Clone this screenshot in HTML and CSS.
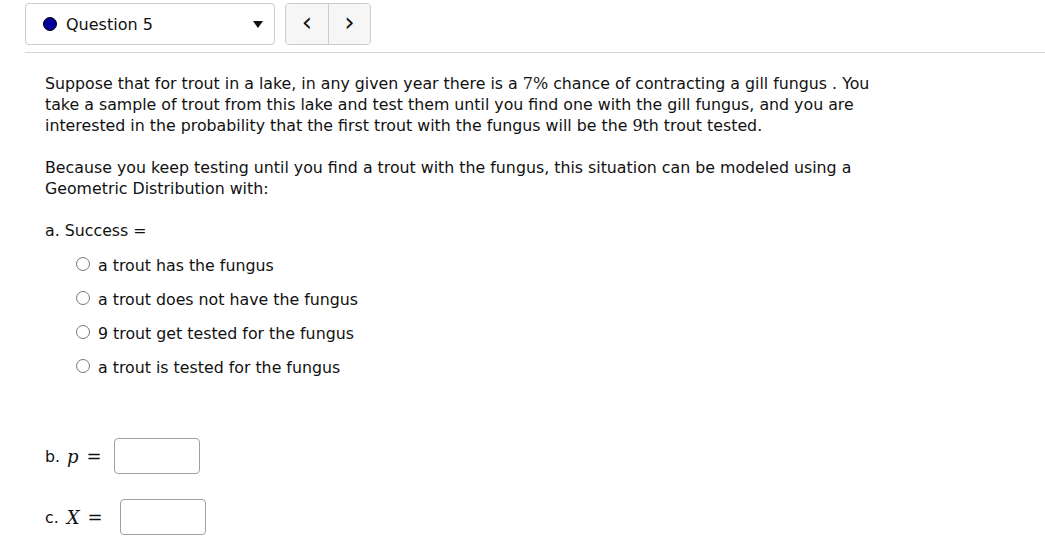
FILE: index.html
```html
<!DOCTYPE html>
<html>
<head>
<meta charset="utf-8">
<link rel="stylesheet" href="styles.css">
</head>
<body>
<div class="topbar">
  <div class="select">
    <span class="dot"></span>
    <span class="qlabel">Question 5</span>
    <span class="caret"></span>
  </div>
  <div class="nav">
    <button class="navbtn">&lsaquo;</button>
    <button class="navbtn">&rsaquo;</button>
  </div>
</div>
<div class="rule"></div>
<div class="content">
  <p class="para">Suppose that for trout in a lake, in any given year there is a <span class="m">7%</span> chance of contracting a gill fungus . You<br>take a sample of trout from this lake and test them until you find one with the gill fungus, and you are<br>interested in the probability that the first trout with the fungus will be the <span class="m">9</span>th trout tested.</p>
  <p class="para">Because you keep testing until you find a trout with the fungus, this situation can be modeled using a<br>Geometric Distribution with:</p>
  <p class="para">a. Success =</p>
  <div class="options">
    <label class="opt"><span class="radio"></span>a trout has the fungus</label>
    <label class="opt"><span class="radio"></span>a trout does not have the fungus</label>
    <label class="opt"><span class="radio"></span>9 trout get tested for the fungus</label>
    <label class="opt"><span class="radio"></span>a trout is tested for the fungus</label>
  </div>
  <div class="ans ans-b">b.<span class="mi">p</span><span class="eq">=</span><span class="box"></span></div>
  <div class="ans ans-c">c.<span class="mi mi-x">X</span><span class="eq">=</span><span class="box"></span></div>
</div>
</body>
</html>
```
FILE: styles.css
```css
html, body {
  margin: 0;
  padding: 0;
  background: #fff;
}
body {
  font-family: "DejaVu Sans", Verdana, sans-serif;
  font-size: 15.8px;
  color: #111;
  width: 1045px;
  height: 546px;
  overflow: hidden;
}
.topbar {
  display: flex;
  gap: 10px;
  padding: 3px 0 0 25px;
  height: 43px;
}
.select {
  width: 231px;
  height: 40px;
  border: 1px solid #ccc;
  border-radius: 4px;
  display: flex;
  align-items: center;
  padding-left: 17px;
  box-sizing: content-box;
}
.dot {
  width: 12px;
  height: 12px;
  border-radius: 50%;
  background: #000099;
  border: 1px solid #000;
  margin-right: 9px;
}
.qlabel {
  font-size: 16px;
  flex: 1;
}
.caret {
  width: 0;
  height: 0;
  border-left: 5px solid transparent;
  border-right: 5px solid transparent;
  border-top: 7px solid #111;
  margin-right: 11px;
}
.nav {
  display: flex;
  height: 40px;
  border: 1px solid #ccc;
  border-radius: 4px;
  background: #f6f6f6;
  overflow: hidden;
}
.navbtn {
  width: 42px;
  height: 40px;
  border: none;
  background: #f6f6f6;
  font-family: "DejaVu Sans", sans-serif;
  font-size: 26px;
  color: #111;
  padding: 0 0 5px 0;
  line-height: 1;
}
.navbtn + .navbtn {
  border-left: 1px solid #ccc;
}
.rule {
  margin: 6px 0 0 25px;
  border-top: 1px solid #d6d6d6;
}
.content {
  padding: 20px 0 0 45px;
}
.para {
  margin: 0 0 21px 0;
  line-height: 21px;
  white-space: nowrap;
}
.m {
  font-family: "DejaVu Serif", "Liberation Serif", serif;
  font-size: 16px;
}
.options {
  display: flex;
  flex-direction: column;
  padding-left: 31px;
  margin-top: -14px;
}
.opt {
  height: 34px;
  display: flex;
  align-items: center;
}
.radio {
  width: 12px;
  height: 12px;
  border: 1px solid #777;
  border-radius: 50%;
  margin-right: 8px;
  margin-bottom: 3px;
  background: #fff;
}
.ans {
  display: flex;
  align-items: center;
  height: 36px;
}
.ans-b {
  margin-top: 54px;
}
.ans-c {
  margin-top: 25px;
}
.mi {
  font-family: "DejaVu Serif", "Liberation Serif", serif;
  font-style: italic;
  font-size: 18px;
  margin-left: 7px;
}
.mi-x {
  margin-left: 8px;
}
.eq {
  font-family: "DejaVu Serif", "Liberation Serif", serif;
  font-size: 18px;
  margin-left: 8px;
  margin-right: 12px;
}
.ans-c .eq {
  margin-right: 17px;
}
.box {
  width: 84px;
  height: 34px;
  border: 1px solid #a0a0a0;
  border-radius: 4px;
}
```
